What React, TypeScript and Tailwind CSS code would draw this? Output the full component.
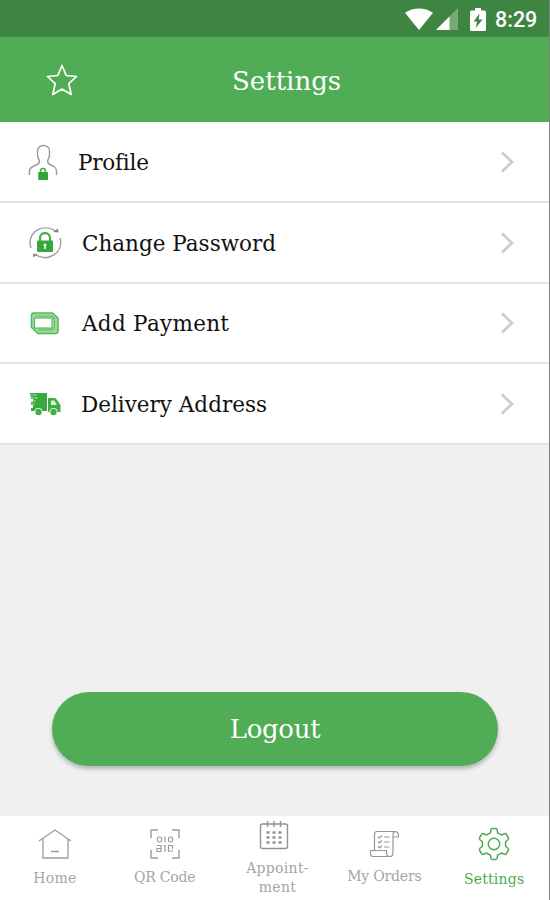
import type { ReactNode } from 'react';

const slab = "font-['Roboto_Slab','DejaVu_Serif',serif]";

function StatusBar() {
  return (
    <div className="flex h-[37px] items-center bg-[#3f8542] pt-px pr-[11px] text-white">
      <svg className="ml-auto h-[22px] w-[28px]" viewBox="0 0 28 22" fill="currentColor">
        <path d="M0 4.8C8 -1 20 -1 28 4.8L14 22Z" />
      </svg>
      <svg className="ml-[3px] h-[22px] w-[22px]" viewBox="0 0 22 22" fill="currentColor">
        <path d="M22 0V22H0Z" opacity=".3" />
        <path d="M13.5 8.5V22H0Z" />
      </svg>
      <svg className="ml-[12px] h-[23px] w-[16px]" viewBox="0 0 16 23">
        <path d="M5 0h6v2.5h3.5Q16 2.500 16 4V21.500Q16 23 14.500 23H1.500Q0 23 0 21.500V4Q0 2.500 1.500 2.500H5Z" fill="white" />
        <path d="M9.500 5.500L3.500 13.500H7L5.800 20L12.500 11.500H8.700Z" fill="#3f8542" />
      </svg>
      <span className="ml-[9px] w-[43px] pt-px whitespace-nowrap font-[Roboto,sans-serif] text-[21.500px] leading-none font-medium">8:29</span>
    </div>
  );
}

function ProfileIcon() {
  return (
    <svg className="h-[36px] w-[30px]" viewBox="0 0 30 36" fill="none">
      <path d="M1.500 31V27Q1.500 24 5 22.500L10 20Q12 19 11 15.500Q9.500 14 9.500 11V7C9.500 -.3 21.500 -.3 21.500 7V11Q21.500 14 20 15.500Q19 19 21 20L26 22.500Q28.500 24 28.500 27V31" stroke="#999" strokeWidth="1.400" />
      <path d="M12.500 29V27C12.500 23.500 17.500 23.500 17.500 27V29" stroke="#43b047" strokeWidth="1.500" />
      <rect x="10.200" y="28" width="9.800" height="8" rx=".7" fill="#32a539" />
    </svg>
  );
}

function PasswordIcon() {
  return (
    <svg className="h-[36px] w-[36px]" viewBox="0 0 36 36" fill="none">
      <path d="M4 23C-1 9 14 -3 29 6M33 13C37 27 22 38 8 29.500" stroke="#9c9c9c" strokeWidth="1.400" />
      <path d="M26 7L31.500 7.500L31 3.500ZM6 32.500L6.500 28.500L10.500 29.500Z" fill="#858585" />
      <path d="M13 16V13C13 6.500 23 6.500 23 13V16" stroke="#43ae48" strokeWidth="2.200" />
      <rect x="10" y="15.500" width="16" height="11.500" rx="1" fill="#36a83d" />
      <circle cx="18" cy="20" r="1.500" fill="white" />
      <path d="M18 20V24" stroke="white" strokeWidth="1.500" />
    </svg>
  );
}

function PaymentIcon() {
  return (
    <svg className="h-[23px] w-[30px]" viewBox="0 0 30 23" fill="none">
      <path d="M4 1H22.500L28 6V19Q28 21.500 25.500 21.500H8L1.500 15.500V3.500Q1.500 1 4 1Z" fill="#9fdb9f" stroke="#4fb955" strokeWidth="1.500" />
      <rect x="4.500" y="6" width="17.500" height="10" fill="white" stroke="#45b34b" strokeWidth="1" />
      <path d="M5 4H21Q24.500 4 24.500 7V15Q24.500 18 22 18H8" stroke="#5dbd61" strokeWidth="1" />
    </svg>
  );
}

function TruckIcon() {
  return (
    <svg className="h-[24px] w-[31px]" viewBox="0 0 31 24" fill="none">
      <path d="M0 1H17V19H1V16H3V13H1V10H3V7H1V4H0Z" fill="#36aa3d" />
      <path d="M18 6H24.500Q26 6 27 8L30.500 13V20H18Z" fill="#3eae44" />
      <path d="M21 8.500H24.300L27 13H21Z" fill="#dff3df" />
      <path d="M0 3H7M0 6H8M0 9H6M0 12H5" stroke="#c4e8c4" strokeWidth=".8" />
      <circle cx="8.500" cy="20" r="4" fill="white" />
      <circle cx="23.500" cy="20" r="4" fill="white" />
      <circle cx="8.500" cy="20" r="3.200" fill="#43ae48" />
      <circle cx="23.500" cy="20" r="3.200" fill="#43ae48" />
    </svg>
  );
}

function MenuRow({ icon, label, className }: { icon: ReactNode; label: ReactNode; className: string }) {
  return (
    <div className={`flex items-center border-b-2 border-[#e2e2e2] bg-white pr-[35px] ${className}`}>
      {icon}
      {label}
      <svg className="ml-auto h-[22px] w-[13px]" viewBox="0 0 13 22" fill="none">
        <path d="M1 1.500L11 11L1 20.500" stroke="#cdcdcd" strokeWidth="2.800" />
      </svg>
    </div>
  );
}

function HomeIcon() {
  return (
    <svg className="h-[32px] w-[34px]" viewBox="0 0 34 32" fill="none" stroke="#9d9d9d" strokeWidth="1.300">
      <path d="M1 13L17 2L33 13M5 11V30H30V11M13 23.500H21" />
    </svg>
  );
}

function QrIcon() {
  return (
    <svg className="h-[30px] w-[30px]" viewBox="0 0 30 30" fill="none" stroke="#9a9a9a" strokeWidth="1.400">
      <path d="M1 9V1H8M22 1H29V9M29 21V29H22M8 29H1V21" />
      <rect x="7.500" y="8" width="4" height="5" rx="1.500" strokeWidth="1.200" />
      <rect x="18.500" y="8" width="4" height="5" rx="1.500" strokeWidth="1.200" />
      <path d="M15 7.500V13.500M7 16.500H11V22.500H7V19.500H11M13.500 16.500H15V23M18.500 23V16.500H22.500V20" strokeWidth="1.200" />
      <path d="M19.500 22H23" strokeWidth="2" stroke="#c7c7c7" />
    </svg>
  );
}

function CalendarIcon() {
  return (
    <svg className="h-[30px] w-[30px]" viewBox="0 0 30 30" fill="none" stroke="#929292" strokeWidth="1.400">
      <rect x="1.500" y="4" width="27" height="24.500" rx="2" />
      <path d="M8.500 1V7M15 1V7M21.500 1V7" />
      <path d="M7.500 12.500H10.500M13.500 12.500H16.500M19.500 12.500H22.500M7.500 17.500H10.500M13.500 17.500H16.500M19.500 17.500H22.500M7.500 22.500H10.500M13.500 22.500H16.500M19.500 22.500H22.500" strokeWidth="2.600" />
    </svg>
  );
}

function OrdersIcon() {
  return (
    <svg className="h-[28px] w-[30px]" viewBox="0 0 30 28" fill="none" stroke="#969696" strokeWidth="1.200">
      <path d="M5.500 20V5Q5.500 1.500 8 1.500H26Q29.500 1.500 29.500 6V7H24V23Q24 26.500 21 26.500H4Q1.500 26.500 1.500 23V20.500H17.500V23Q17.500 26.500 21 26.500M26 1.500Q24 2 24 5V8" />
      <path d="M9 6.500L10.500 8L13 5.500M9 11.500L10.500 13L13 10.500M9 16.500L10.500 18L13 15.500M15 7H20.500M15 12H20.500M15 17H20.500" />
    </svg>
  );
}

function GearIcon() {
  return (
    <svg className="h-[34px] w-[32px]" viewBox="0 0 32 34" fill="none" stroke="#4daa51" strokeWidth="1.500" strokeLinejoin="round">
      <path d="M12.800 3Q13 1.500 14.500 1.500H17.500Q19 1.500 19.200 3L19.600 6Q22 6.800 23.500 8L26.500 6.700Q27.800 6.300 28.500 7.500L30.300 10.500Q31 11.800 30 12.700L27.500 14.800Q27.800 17 27.500 19.200L30 21.300Q31 22.200 30.300 23.500L28.500 26.500Q27.800 27.700 26.500 27.300L23.500 26Q22 27.200 19.600 28L19.200 31Q19 32.500 17.500 32.500H14.500Q13 32.500 12.800 31L12.400 28Q10 27.200 8.500 26L5.500 27.300Q4.200 27.700 3.500 26.500L1.700 23.500Q1 22.200 2 21.300L4.500 19.200Q4.200 17 4.500 14.800L2 12.700Q1 11.800 1.700 10.500L3.500 7.500Q4.200 6.300 5.500 6.700L8.500 8Q10 6.800 12.400 6Z" />
      <circle cx="16" cy="17" r="5.700" />
    </svg>
  );
}

export default function App() {
  return (
    <div className={`flex h-[900px] w-[550px] flex-col overflow-hidden border-r border-[#808080] bg-[#f0f0f0] ${slab}`}>
      <StatusBar />

      <header className="flex h-[85px] items-center bg-[#50ad55] pl-[46px] text-white">
        <svg className="h-[32px] w-[32px]" viewBox="0 0 32 32" fill="none" stroke="currentColor" strokeWidth="1.700" strokeLinejoin="round">
          <path d="M16 1.500L20.200 11.500L30.500 12.500L22.800 19.600L25.200 30.500L16 25L6.800 30.500L9.200 19.600L1.500 12.500L11.800 11.500Z" />
        </svg>
        <h1 className="ml-[154px] pt-[2px] text-[26px] leading-none">Settings</h1>
      </header>

      <main className="flex flex-1 flex-col text-[21.500px] leading-none text-[#111]">
        <MenuRow className="h-[81px] pl-[28px]" icon={<ProfileIcon />} label={<span className="ml-[20px] pt-[2px] tracking-[-0.2px]">Profile</span>} />
        <MenuRow className="h-[81px] pl-[27px]" icon={<PasswordIcon />} label={<span className="ml-[19px] pt-[2px]">Change Password</span>} />
        <MenuRow className="h-[80px] pl-[30px]" icon={<PaymentIcon />} label={<span className="ml-[22px] pt-[2px] tracking-[0.3px]">Add Payment</span>} />
        <MenuRow className="h-[81px] pl-[30px]" icon={<TruckIcon />} label={<span className="ml-[20px] pt-[2px]">Delivery Address</span>} />

        <button className="mt-auto mb-[50px] ml-[52px] h-[74px] w-[446px] rounded-full bg-[#50ad55] text-[26px] leading-none tracking-[-0.3px] text-white shadow-[0_3px_4px_rgba(0,0,0,0.25)]">
          Logout
        </button>
      </main>

      <nav className="grid h-[84px] grid-cols-5 bg-white text-[14px] leading-[19px] text-[#a5a5a5]">
        <div className="flex flex-col items-center pt-[12px]">
          <HomeIcon />
          <span className="mt-[9px] tracking-[0.3px]">Home</span>
        </div>
        <div className="flex flex-col items-center pt-[13px]">
          <QrIcon />
          <span className="mt-[9px] tracking-[-0.2px]">QR Code</span>
        </div>
        <div className="flex flex-col items-center pt-[4px] text-center">
          <CalendarIcon />
          <span className="mt-[9px] ml-[6px] tracking-[0.3px]">Appoint-<br />ment</span>
        </div>
        <div className="flex flex-col items-center pt-[14px]">
          <OrdersIcon />
          <span className="mt-[9px] tracking-[-0.2px]">My Orders</span>
        </div>
        <div className="flex flex-col items-center pt-[11px] text-[#4daa51]">
          <GearIcon />
          <span className="mt-[9px] tracking-[0.2px]">Settings</span>
        </div>
      </nav>
    </div>
  );
}
